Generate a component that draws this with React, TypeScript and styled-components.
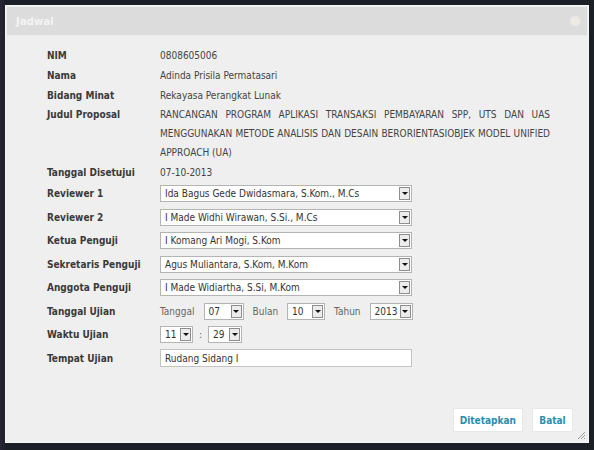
import React from "react";
import styled, { createGlobalStyle } from "styled-components";

const Global = createGlobalStyle`
  html, body { margin: 0; padding: 0; background: #1b2026; }
  body { width: 594px; height: 450px; overflow: hidden; font-family: "DejaVu Sans Condensed", "DejaVu Sans", sans-serif; }
`;

const Screen = styled.div`
  width: 594px;
  height: 450px;
  box-sizing: border-box;
  padding: 5px 5px 7px 5px;
  background: linear-gradient(90deg, #2a2438 0px, #1b2026 6px, #1b2026 100%);
`;

const Dialog = styled.div`
  width: 584px;
  height: 438px;
  box-sizing: border-box;
  border: 1px solid #f7f7f7;
  background: #efefef;
  display: flex;
  flex-direction: column;
  position: relative;
`;

const TitleBar = styled.div`
  height: 28px;
  margin: 1px 1px 0 1px;
  background: #dcdcdc;
  display: flex;
  align-items: center;
  justify-content: space-between;
  padding: 0 8px 0 9px;
  border-bottom: 1px solid #e9e9e9;
`;

const Title = styled.span`
  color: #f4f4f4;
  font-weight: bold;
  font-size: 11px;
  letter-spacing: 0.2px;
`;

const Close = styled.span`
  width: 8px;
  height: 8px;
  border-radius: 50%;
  background: #efeae4;
  box-shadow: 0 0 3px #fff;
`;

const Body = styled.div`
  flex: 1;
  padding: 9px 38px 0 41px;
  display: grid;
  grid-template-columns: 113px 1fr;
  align-content: start;
  font-size: 10px;
  color: #444;
`;

const Label = styled.div<{ $h: number; $top?: boolean }>`
  min-height: ${(p) => p.$h}px;
  display: flex;
  align-items: ${(p) => (p.$top ? "flex-start" : "center")};
  line-height: 19px;
  font-weight: bold;
  color: #3a3a3a;
`;

const Value = styled.div<{ $h: number; $gap?: number }>`
  min-height: ${(p) => p.$h}px;
  display: flex;
  align-items: center;
  gap: ${(p) => p.$gap ?? 7}px;
  color: #444;
`;

const Justified = styled.div`
  line-height: 19px;
  text-align: justify;
  text-align-last: left;
  color: #444;
  width: 390px;
`;

const SelectBox = styled.div<{ $w: number }>`
  width: ${(p) => p.$w}px;
  height: 17px;
  box-sizing: border-box;
  border: 1px solid #b4b4b4;
  background: #fff;
  display: flex;
  align-items: center;
  justify-content: space-between;
  padding: 0 1px 0 4px;
  color: #333;
  font-size: 10px;
`;

const Arrow = styled.span`
  width: 11px;
  height: 13px;
  box-sizing: border-box;
  border: 1px solid #8e8e8e;
  background: #ececec;
  display: flex;
  align-items: center;
  justify-content: center;
  &::after {
    content: "";
    border-left: 3px solid transparent;
    border-right: 3px solid transparent;
    border-top: 3px solid #111;
  }
`;

const TextInput = styled.div`
  width: 252px;
  height: 18px;
  box-sizing: border-box;
  border: 1px solid #c4c4c4;
  background: #fff;
  padding: 0 4px;
  display: flex;
  align-items: center;
  color: #333;
`;

const Inline = styled.span`
  color: #666;
`;

const Footer = styled.div`
  display: flex;
  justify-content: flex-end;
  gap: 9px;
  padding: 0 15px 10px 0;
`;

const Button = styled.button<{ $min?: number }>`
  height: 24px;
  min-width: ${(p) => p.$min ?? 0}px;
  padding: 0 6px;
  border: 1px solid #e8e8e8;
  background: #fff;
  color: #2d8bb1;
  font-family: inherit;
  font-weight: bold;
  font-size: 10px;
`;

const Grip = styled.svg`
  position: absolute;
  right: 2px;
  bottom: 2px;
`;

function Select({ w, v }: { w: number; v: string }) {
  return (
    <SelectBox $w={w}>
      <span>{v}</span>
      <Arrow />
    </SelectBox>
  );
}

const textRows: [string, string][] = [
  ["NIM", "0808605006"],
  ["Nama", "Adinda Prisila Permatasari"],
  ["Bidang Minat", "Rekayasa Perangkat Lunak"],
];

const selectRows: [string, string][] = [
  ["Reviewer 1", "Ida Bagus Gede Dwidasmara, S.Kom., M.Cs"],
  ["Reviewer 2", "I Made Widhi Wirawan, S.Si., M.Cs"],
  ["Ketua Penguji", "I Komang Ari Mogi, S.Kom"],
  ["Sekretaris Penguji", "Agus Muliantara, S.Kom, M.Kom"],
  ["Anggota Penguji", "I Made Widiartha, S.Si, M.Kom"],
];

export default function App() {
  return (
    <Screen>
      <Global />
      <Dialog>
        <TitleBar>
          <Title>Jadwal</Title>
          <Close />
        </TitleBar>
        <Body>
          {textRows.map(([l, v]) => (
            <React.Fragment key={l}>
              <Label $h={20}>{l}</Label>
              <Value $h={20}>{v}</Value>
            </React.Fragment>
          ))}
          <Label $h={20} $top>Judul Proposal</Label>
          <Justified>
            RANCANGAN PROGRAM APLIKASI TRANSAKSI PEMBAYARAN SPP, UTS DAN UAS MENGGUNAKAN METODE ANALISIS DAN DESAIN BERORIENTASIOBJEK MODEL UNIFIED APPROACH (UA)
          </Justified>
          <Label $h={20}>Tanggal Disetujui</Label>
          <Value $h={20}>07-10-2013</Value>
          {selectRows.map(([l, v]) => (
            <React.Fragment key={l}>
              <Label $h={23.5}>{l}</Label>
              <Value $h={23.5}>
                <Select w={252} v={v} />
              </Value>
            </React.Fragment>
          ))}
          <Label $h={23.5}>Tanggal Ujian</Label>
          <Value $h={23.5} $gap={9}>
            <Inline>Tanggal</Inline>
            <Select w={40} v="07" />
            <Inline>Bulan</Inline>
            <Select w={38} v="10" />
            <Inline>Tahun</Inline>
            <Select w={43} v="2013" />
          </Value>
          <Label $h={23.5}>Waktu Ujian</Label>
          <Value $h={23.5} $gap={6}>
            <Select w={33} v="11" />
            <Inline>:</Inline>
            <Select w={34} v="29" />
          </Value>
          <Label $h={23.5}>Tempat Ujian</Label>
          <Value $h={23.5}>
            <TextInput>Rudang Sidang I</TextInput>
          </Value>
        </Body>
        <Footer>
          <Button>Ditetapkan</Button>
          <Button $min={41}>Batal</Button>
        </Footer>
        <Grip width="10" height="10" viewBox="0 0 10 10">
          <path d="M9 2 L2 9 M9 5 L5 9 M9 8 L8 9" stroke="#999" strokeWidth="1" />
        </Grip>
      </Dialog>
    </Screen>
  );
}
